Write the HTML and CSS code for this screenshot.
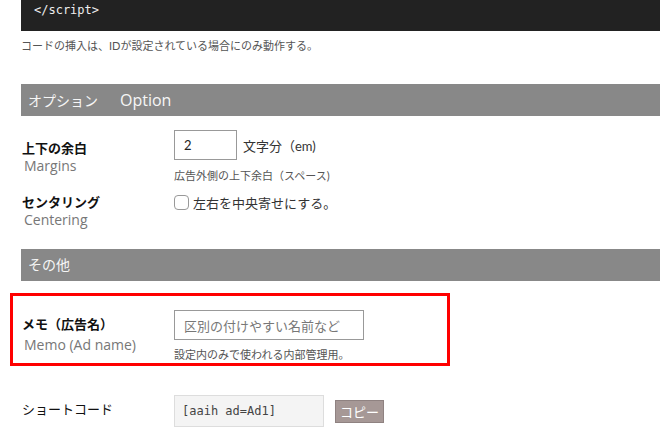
FILE: index.html
```html
<!DOCTYPE html>
<html lang="ja">
<head>
<meta charset="utf-8">
<title>Options</title>
<link rel="stylesheet" href="styles.css">
</head>
<body>
<div class="page">
  <pre class="code">&lt;/script&gt;</pre>
  <p class="note">コードの挿入は、IDが設定されている場合にのみ動作する。</p>

  <h2 class="bar"><span>オプション</span><span class="en">Option</span></h2>

  <div class="row row-margins">
    <div class="label"><div class="ja">上下の余白</div><div class="en-sub">Margins</div></div>
    <div class="value">
      <div class="inline"><input class="num" type="text" value="2"><span class="unit">文字分（em)</span></div>
      <div class="hint hint-margins">広告外側の上下余白（スペース)</div>
    </div>
  </div>

  <div class="row row-center">
    <div class="label"><div class="ja">センタリング</div><div class="en-sub">Centering</div></div>
    <div class="value">
      <label class="check"><input type="checkbox"><span>左右を中央寄せにする。</span></label>
    </div>
  </div>

  <h2 class="bar bar-other"><span>その他</span></h2>

  <div class="highlight">
    <div class="row row-memo">
      <div class="label"><div class="ja">メモ（広告名）</div><div class="en-sub en-memo">Memo (Ad name)</div></div>
      <div class="value">
        <input class="memo" type="text" placeholder="区別の付けやすい名前など">
        <div class="hint hint-memo">設定内のみで使われる内部管理用。</div>
      </div>
    </div>
  </div>

  <div class="row row-short">
    <div class="label plain">ショートコード</div>
    <div class="value inline">
      <input class="short" type="text" value="[aaih ad=Ad1]" readonly>
      <button class="copy" type="button">コピー</button>
    </div>
  </div>
</div>
</body>
</html>
```
FILE: styles.css
```css
html, body {
  margin: 0;
  padding: 0;
  background: #fff;
}
body {
  font-family: Lato, "Noto Sans CJK JP", sans-serif;
  color: #222;
  overflow: hidden;
}
.page {
  padding-left: 21px;
}
.code {
  margin: 0;
  background: #222;
  color: #eee;
  height: 31px;
  box-sizing: border-box;
  padding: 2px 0 0 13px;
  font: 12px/16px "DejaVu Sans Mono", monospace;
  overflow: hidden;
  white-space: pre;
}
.note {
  margin: 7px 0 0;
  font-size: 11px;
  line-height: 16px;
  color: #555;
}
.bar {
  margin: 30px 0 0;
  height: 32px;
  background: #888;
  color: #f6f6f6;
  font-weight: normal;
  font-size: 14px;
  line-height: 32px;
  padding-left: 7px;
  font-family: "Open Sans", "Noto Sans CJK JP", sans-serif;
}
.bar .en {
  margin-left: 22px;
  font-size: 16px;
}
.bar-other {
  margin-top: 21px;
}
.row {
  display: grid;
  grid-template-columns: 153px 1fr;
}
.label .ja {
  font-weight: bold;
  font-size: 13px;
  line-height: 17px;
  padding-left: 1px;
  color: #111;
}
.en-sub {
  font-family: "Open Sans", sans-serif;
  font-size: 14px;
  line-height: 17px;
  color: #777;
  padding-left: 3px;
}
.row-margins {
  margin-top: 14px;
}
.row-margins .label {
  padding-top: 10px;
}
.inline {
  display: flex;
  align-items: center;
}
input.num {
  width: 63px;
  height: 30px;
  box-sizing: border-box;
  border: 1px solid #999;
  padding: 0 0 0 9px;
  font: 13px Lato, sans-serif;
  color: #222;
  margin: 0;
}
.unit {
  margin-left: 6px;
  font-size: 13px;
  color: #333;
}
.hint {
  font-size: 11px;
  line-height: 16px;
  color: #555;
}
.hint-margins {
  margin-top: 8px;
}
.row-center {
  margin-top: 10px;
}
.check {
  display: flex;
  align-items: center;
  height: 17px;
  font-size: 13px;
  color: #333;
}
.check input {
  appearance: none;
  -webkit-appearance: none;
  width: 15px;
  height: 15px;
  box-sizing: border-box;
  border: 1px solid #999;
  border-radius: 4px;
  margin: 0 4px 0 0;
  background: #fff;
}
.highlight {
  margin: 12px 0 0 -11px;
  width: 440px;
  box-sizing: border-box;
  border: 3px solid #f00;
  padding: 14px 0 0 8px;
  height: 73px;
}
.row-memo .label {
  padding-top: 6px;
}
.en-memo {
  margin-top: 3px;
}
input.memo {
  display: block;
  width: 190px;
  height: 30px;
  box-sizing: border-box;
  border: 1px solid #999;
  padding: 0 0 0 9px;
  font: 13px "Noto Sans CJK JP", sans-serif;
  margin: 0;
}
input.memo::placeholder {
  color: #777;
}
.hint-memo {
  margin-top: 7px;
}
.row-short {
  margin-top: 29px;
}
.label.plain {
  font-size: 13px;
  line-height: 17px;
  padding-top: 6px;
  padding-left: 1px;
  color: #111;
}
input.short {
  width: 150px;
  height: 32px;
  box-sizing: border-box;
  border: 1px solid #ddd;
  background: #f4f4f4;
  padding: 0 0 0 7px;
  font: 12px "DejaVu Sans Mono", monospace;
  color: #444;
  margin: 0;
}
.copy {
  margin: 0 0 0 11px;
  width: 49px;
  height: 23px;
  box-sizing: border-box;
  background: #a69896;
  border: 1px solid #8f8281;
  color: #fff;
  font: 13px "Noto Sans CJK JP", sans-serif;
  padding: 0;
  line-height: 21px;
}
```
